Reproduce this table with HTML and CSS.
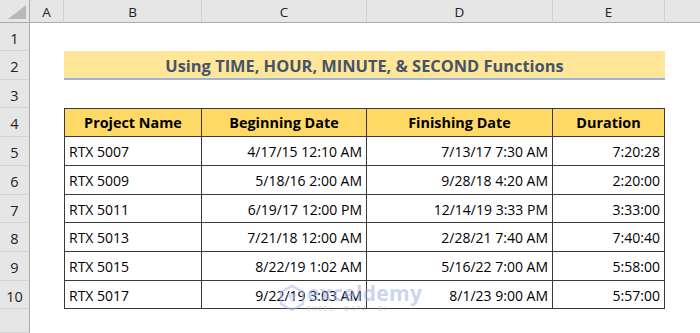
FILE: index.html
```html
<!DOCTYPE html>
<html>
<head>
<meta charset="utf-8">
<link rel="stylesheet" href="styles.css">
</head>
<body>
<div class="sheet">
  <div class="corner"><svg class="tri" width="18" height="14" viewBox="0 0 18 14"><polygon points="18,0 18,14 0,14" fill="#b8b8b8"/></svg></div>
  <div class="ch">A</div><div class="ch">B</div><div class="ch">C</div><div class="ch">D</div><div class="ch">E</div><div class="ch last"></div>

  <div class="rh">1</div><div class="row-fill"></div>
  <div class="rh">2</div><div class="cell"></div><div class="title">Using TIME, HOUR, MINUTE, &amp; SECOND Functions</div><div class="cell"></div>
  <div class="rh">3</div><div class="row-fill"></div>

  <div class="rh">4</div><div class="cell"></div>
  <div class="th first">Project Name</div><div class="th">Beginning Date</div><div class="th">Finishing Date</div><div class="th">Duration</div><div class="cell"></div>

  <div class="rh">5</div><div class="cell"></div>
  <div class="td first">RTX 5007</div><div class="td num">4/17/15 12:10 AM</div><div class="td num">7/13/17 7:30 AM</div><div class="td num">7:20:28</div><div class="cell"></div>

  <div class="rh">6</div><div class="cell"></div>
  <div class="td first">RTX 5009</div><div class="td num">5/18/16 2:00 AM</div><div class="td num">9/28/18 4:20 AM</div><div class="td num">2:20:00</div><div class="cell"></div>

  <div class="rh">7</div><div class="cell"></div>
  <div class="td first">RTX 5011</div><div class="td num">6/19/17 12:00 PM</div><div class="td num">12/14/19 3:33 PM</div><div class="td num">3:33:00</div><div class="cell"></div>

  <div class="rh">8</div><div class="cell"></div>
  <div class="td first">RTX 5013</div><div class="td num">7/21/18 12:00 AM</div><div class="td num">2/28/21 7:40 AM</div><div class="td num">7:40:40</div><div class="cell"></div>

  <div class="rh">9</div><div class="cell"></div>
  <div class="td first">RTX 5015</div><div class="td num">8/22/19 1:02 AM</div><div class="td num">5/16/22 7:00 AM</div><div class="td num">5:58:00</div><div class="cell"></div>

  <div class="rh">10</div><div class="cell"></div>
  <div class="td first">RTX 5017</div><div class="td num">9/22/19 3:03 AM</div><div class="td num">8/1/23 9:00 AM</div><div class="td num">5:57:00</div><div class="cell"></div>

  <div class="rh"></div><div class="row-fill"></div>

  <div class="watermark">
    <svg width="26" height="26" viewBox="0 0 26 26"><polygon points="13,1 24,7 24,19 13,25 2,19 2,7" fill="none" stroke="rgba(170,185,235,0.55)" stroke-width="2.5"/><polygon points="8,9 18,9 13,18" fill="rgba(190,200,240,0.5)"/></svg>
    <div class="wm-text">
      <span class="wm-big">exceldemy</span>
      <span class="wm-small">EXCEL · DATA · BI</span>
    </div>
  </div>
</div>
</body>
</html>
```

FILE: styles.css
```css
html, body {
  margin: 0;
  padding: 0;
  background: #fff;
}
.sheet {
  position: relative;
  width: 700px;
  height: 333px;
  display: grid;
  grid-template-columns: 30px 34px 138px 165px 186px 112px 1fr;
  grid-template-rows: 23px 28px 29px 28px 29px 29px 29px 28px 29px 29px 28px 1fr;
  font-family: "Open Sans", "Liberation Sans", sans-serif;
  font-size: 13px;
  color: #000;
  overflow: hidden;
}
.corner {
  background: #e6e6e6;
  border-right: 1px solid #ababab;
  border-bottom: 1px solid #ababab;
  box-sizing: border-box;
  display: flex;
  align-items: flex-end;
  justify-content: flex-end;
  padding: 0 3px 3px 0;
}
.ch {
  background: #e6e6e6;
  border-bottom: 1px solid #ababab;
  border-right: 1px solid #d0d0d0;
  box-sizing: border-box;
  display: flex;
  align-items: center;
  justify-content: center;
  font-family: "Open Sans", sans-serif;
  font-size: 13.5px;
  color: #222;
  padding-top: 1px;
}
.ch.last { border-right: none; }
.rh {
  background: #e6e6e6;
  border-right: 1px solid #ababab;
  border-bottom: 1px solid #d4d4d4;
  box-sizing: border-box;
  display: flex;
  align-items: center;
  justify-content: center;
  font-family: "Open Sans", sans-serif;
  font-size: 14.5px;
  color: #222;
  padding-top: 3px;
}
.row-fill { grid-column: 2 / 8; }
.cell { background: #fff; }
.title {
  grid-column: 3 / 7;
  background: #ffe699;
  border-bottom: 2px solid #9db3e3;
  box-sizing: border-box;
  display: flex;
  align-items: center;
  justify-content: center;
  font-weight: bold;
  font-size: 16.4px;
  color: #44546a;
  padding-top: 1px;
}
.th, .td {
  box-sizing: border-box;
  border-right: 1px solid #3a3a3a;
  border-bottom: 1px solid #3a3a3a;
  display: flex;
  align-items: center;
  white-space: nowrap;
}
.th {
  background: #ffd966;
  border-top: 1px solid #3a3a3a;
  justify-content: center;
  font-weight: bold;
  font-size: 14.4px;
}
.th.first, .td.first { border-left: 1px solid #3a3a3a; }
.td { padding: 0 4px; font-size: 14px; padding-top: 1px; }
.td.num { justify-content: flex-end; }
.watermark {
  position: absolute;
  left: 279px;
  top: 283px;
  display: flex;
  align-items: center;
  gap: 2px;
  pointer-events: none;
}
.wm-text {
  display: flex;
  flex-direction: column;
  line-height: 1;
}
.wm-big {
  font-family: "Open Sans", sans-serif;
  font-weight: bold;
  font-size: 21px;
  color: rgba(150, 170, 230, 0.5);
  letter-spacing: 0.3px;
}
.wm-small {
  font-family: "Open Sans", sans-serif;
  font-size: 7px;
  color: rgba(150, 160, 190, 0.5);
  letter-spacing: 1.5px;
  margin-top: 1px;
}
```
